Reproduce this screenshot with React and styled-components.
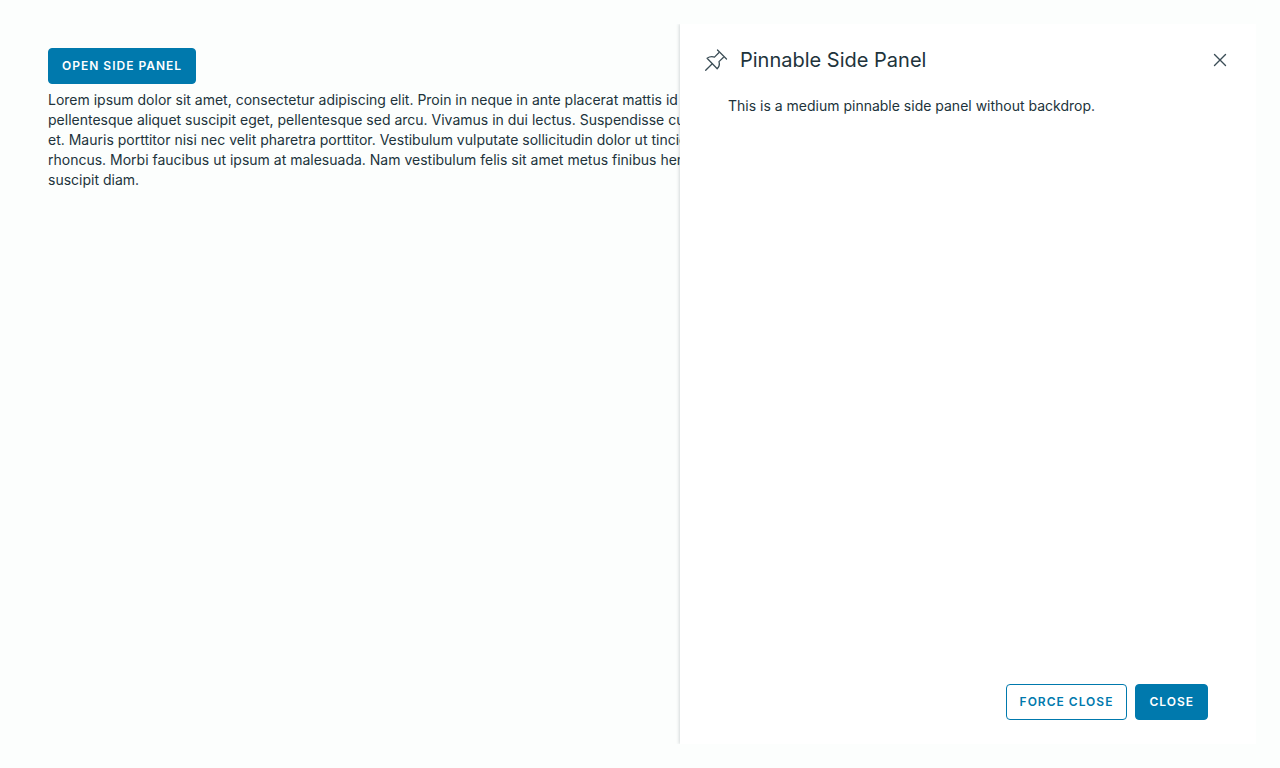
import React from "react";
import styled, { createGlobalStyle, css } from "styled-components";

const GlobalStyle = createGlobalStyle`
  *, *::before, *::after { box-sizing: border-box; }
  body {
    margin: 0;
    background: #fcfefd;
    color: #21333b;
    font: 400 14px/20px "Inter", "Noto Sans", sans-serif;
  }
`;

const Page = styled.div`
  display: flex;
  min-height: 100vh;
  padding: 24px;
  overflow: hidden;
`;

const Stage = styled.div`
  position: relative;
  flex: 1;
  min-width: 0;
`;

const Content = styled.main`
  display: flex;
  flex-direction: column;
  align-items: flex-start;
  gap: 6px;
  padding: 24px;
`;

const Passage = styled.p`
  margin: 0;
  white-space: nowrap;
`;

const SidePanel = styled.aside`
  position: absolute;
  inset: 0 0 0 auto;
  display: flex;
  flex-direction: column;
  width: 576px;
  max-width: 100%;
  background: #fff;
  box-shadow: -1px 0 3px rgba(33, 51, 59, 0.18);
  clip-path: inset(0 0 0 -4px);
`;

const PanelHeader = styled.header`
  display: flex;
  align-items: center;
  gap: 12px;
  padding: 24px 24px 0;
`;

const PanelTitle = styled.h2`
  flex: 1;
  margin: 0;
  font-size: 20px;
  font-weight: 400;
  line-height: 24px;
`;

const IconButton = styled.button`
  display: flex;
  padding: 0;
  border: 0;
  background: none;
  color: #3b4d56;
  cursor: pointer;
`;

const PanelBody = styled.div`
  flex: 1;
  padding: 24px 48px;
`;

const PanelText = styled.p`
  margin: 0;
`;

const PanelFooter = styled.footer`
  display: flex;
  justify-content: flex-end;
  gap: 8px;
  padding: 24px 48px;
`;

const Button = styled.button`
  height: 36px;
  padding: 0 13px;
  border: 1px solid #0079ad;
  border-radius: 4px;
  background: #0079ad;
  color: #fff;
  font: 600 12px/20px "Inter", "Noto Sans", sans-serif;
  letter-spacing: 1px;
  text-transform: uppercase;
  cursor: pointer;
  ${({ $outline }) =>
    $outline &&
    css`
      background: #fff;
      color: #0079ad;
    `}
`;

const PinIcon = () => (
  <svg width="24" height="24" viewBox="0 0 24 24" fill="none" stroke="currentColor" strokeWidth="1.3" strokeLinejoin="round" strokeLinecap="round" aria-hidden="true">
    <path d="M13.500 2 22.500 11" />
    <path d="M14.800 4.800 10.500 9.100C8.200 8.400 5.300 8.700 3.100 10.300L13.200 20.700C15.200 18.700 15.700 16 15 13.600L19.300 9.500" />
    <path d="M8 16 1.700 22.300" />
  </svg>
);

const CloseIcon = () => (
  <svg width="24" height="24" viewBox="0 0 24 24" fill="none" stroke="currentColor" strokeWidth="1.400" strokeLinecap="round" aria-hidden="true">
    <path d="M6.500 6.500 17.500 17.500M17.500 6.500 6.500 17.500" />
  </svg>
);

export default function App() {
  return (
    <>
      <GlobalStyle />
      <Page>
        <Stage>
          <Content>
            <Button type="button">Open side panel</Button>
            <Passage>
              Lorem ipsum dolor sit amet, consectetur adipiscing elit. Proin in neque in ante placerat mattis id
              <br />
              pellentesque aliquet suscipit eget, pellentesque sed arcu. Vivamus in dui lectus. Suspendisse cursus
              <br />
              et. Mauris porttitor nisi nec velit pharetra porttitor. Vestibulum vulputate sollicitudin dolor ut tincidunt
              <br />
              rhoncus. Morbi faucibus ut ipsum at malesuada. Nam vestibulum felis sit amet metus finibus hendrerit
              <br />
              suscipit diam.
            </Passage>
          </Content>
          <SidePanel aria-labelledby="panel-title">
            <PanelHeader>
              <IconButton type="button" aria-label="Pin panel">
                <PinIcon />
              </IconButton>
              <PanelTitle id="panel-title">Pinnable Side Panel</PanelTitle>
              <IconButton type="button" aria-label="Close panel">
                <CloseIcon />
              </IconButton>
            </PanelHeader>
            <PanelBody>
              <PanelText>This is a medium pinnable side panel without backdrop.</PanelText>
            </PanelBody>
            <PanelFooter>
              <Button type="button" $outline>Force close</Button>
              <Button type="button">Close</Button>
            </PanelFooter>
          </SidePanel>
        </Stage>
      </Page>
    </>
  );
}
